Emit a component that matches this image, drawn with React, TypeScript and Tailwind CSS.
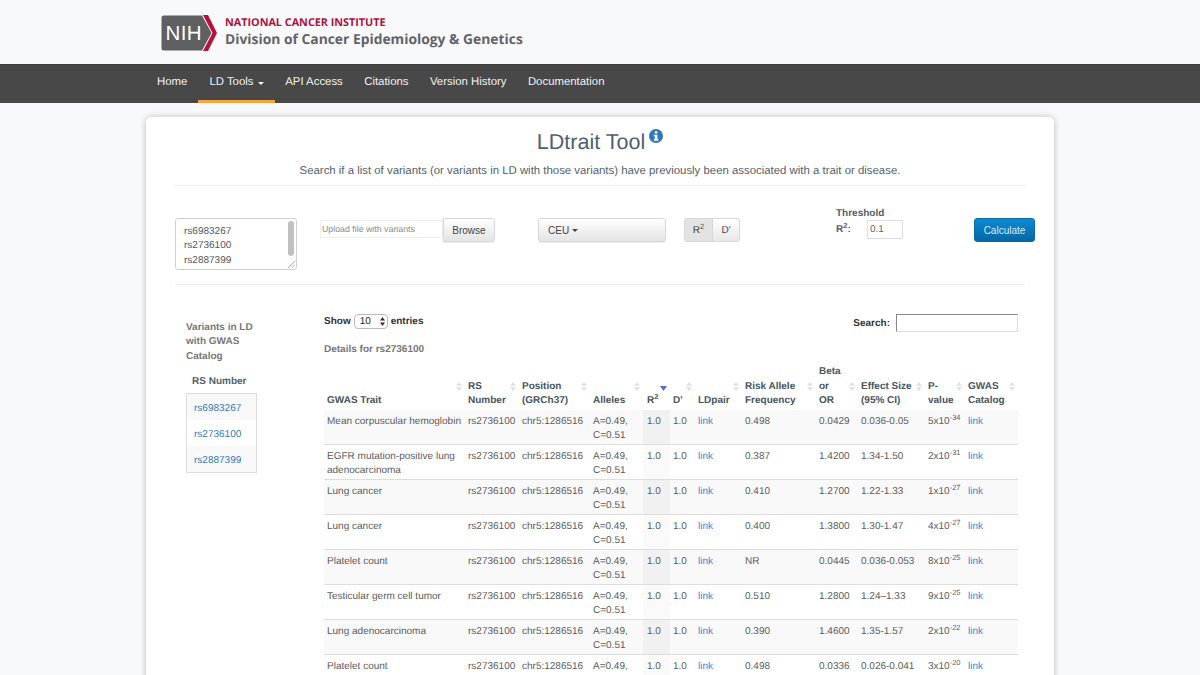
import React from "react";

const rows: [React.ReactNode, string, string, string, string, string][] = [
  ["Mean corpuscular hemoglobin", "0.498", "0.0429", "0.036-0.05", "5", "-34"],
  [<>EGFR mutation-positive lung<br />adenocarcinoma</>, "0.387", "1.4200", "1.34-1.50", "2", "-31"],
  ["Lung cancer", "0.410", "1.2700", "1.22-1.33", "1", "-27"],
  ["Lung cancer", "0.400", "1.3800", "1.30-1.47", "4", "-27"],
  ["Platelet count", "NR", "0.0445", "0.036-0.053", "8", "-25"],
  ["Testicular germ cell tumor", "0.510", "1.2800", "1.24–1.33", "9", "-25"],
  ["Lung adenocarcinoma", "0.390", "1.4600", "1.35-1.57", "2", "-22"],
  ["Platelet count", "0.498", "0.0336", "0.026-0.041", "3", "-20"],
];

const td = "h-[35px] border-b border-[#dddddd] px-[3px] pt-[5px] align-top";

function Sort({ active }: { active?: boolean }) {
  if (active) {
    return (
      <svg className="absolute right-[3px] bottom-[19px] w-[7px] h-[5px]" viewBox="0 0 7 5">
        <path d="M0 0h7L3.500 5z" fill="#5b6fc4" />
      </svg>
    );
  }
  return (
    <svg className="absolute right-[3px] bottom-[19px] w-[6px] h-[9px]" viewBox="0 0 6 9">
      <path d="M3 0l3 3.700H0zM3 9L0 5.300h6z" fill="#dfe1e3" />
    </svg>
  );
}

function Th({ children, w, active, pl }: { children: React.ReactNode; w: string; active?: boolean; pl?: string }) {
  return (
    <th className={`relative ${w} ${pl ?? "pl-[3px]"} pr-[3px] pb-[2px] text-left align-bottom font-bold leading-[14.25px] text-[#4a5560]`}>
      {children}
      <Sort active={active} />
    </th>
  );
}

const Sup = ({ children }: { children: React.ReactNode }) => (
  <sup className="relative top-[-4px] align-baseline text-[7.5px] leading-none">{children}</sup>
);

export default function App() {
  return (
    <div className="h-[675px] overflow-hidden bg-[#f8f9fb] text-[10px] text-[#5a5c60] [text-rendering:geometricPrecision] [font-family:'Liberation_Sans',Arial,sans-serif]">
      <header className="flex h-[64px] items-center gap-[8px] pl-[161px] pt-[1px]">
        <svg width="56" height="36" viewBox="0 0 56 36" className="shrink-0">
          <path d="M3 0.500h38l9.500 17.500-9.500 17.500H3a2.500 2.500 0 0 1-2.500-2.500V3A2.500 2.500 0 0 1 3 0.500z" fill="#5f6062" />
          <path d="M42 0h5l9 18-9 18h-5l9.500-18z" fill="#b5113f" />
          <text x="4.500" y="25" fill="#fff" fontSize="20.5" fontFamily="'Liberation Sans',sans-serif" textLength="36">NIH</text>
        </svg>
        <div className="flex flex-col [font-family:'Open_Sans',sans-serif]">
          <div className="text-[10.800px] font-bold leading-[13px] text-[#b0103f]">NATIONAL CANCER INSTITUTE</div>
          <div className="mt-[2px] text-[13.850px] font-bold leading-[18px] text-[#626467]">Division of Cancer Epidemiology &amp; Genetics</div>
        </div>
      </header>

      <nav className="flex h-[39px] items-stretch border-t border-[#3c3c3c] bg-[#484848] pl-[146px] text-[11.400px] text-[#f2f2f2]">
        <a className="flex items-center px-[11px] pb-[2px]">Home</a>
        <a className="flex items-center border-b-[3px] border-[#f0a63c] px-[11px]">
          LD Tools
          <span className="ml-[4px] mt-[1px] h-0 w-0 border-x-[3px] border-t-[3px] border-x-transparent border-t-[#f2f2f2]" />
        </a>
        <a className="flex items-center px-[10.700px] pb-[2px]">API Access</a>
        <a className="flex items-center px-[10.700px] pb-[2px]">Citations</a>
        <a className="flex items-center px-[10.700px] pb-[2px]">Version History</a>
        <a className="flex items-center px-[10.700px] pb-[2px]">Documentation</a>
      </nav>

      <main className="px-[146px] pt-[14px]">
        <section className="h-[700px] rounded-[5px] bg-white px-[29px] pt-[10px] shadow-[0_0_6px_rgba(0,0,0,0.25)]">
          <div className="flex h-[59px] flex-col items-center border-b border-[#eeeeee]">
            <div className="flex items-start">
              <h1 className="text-[21.500px] leading-[30px] text-[#4d5f72]">LDtrait Tool</h1>
              <svg className="ml-[4px] mt-[2px] h-[14px] w-[14px]" viewBox="0 0 14 14">
                <circle cx="7" cy="7" r="7" fill="#2f78b9" />
                <rect x="5.800" y="2.300" width="2.600" height="2.300" rx=".5" fill="#fff" />
                <path d="M4.800 5.700h3.600v4.500h1v1.500H4.800v-1.500h1V7.200h-1z" fill="#fff" />
              </svg>
            </div>
            <p className="mt-[6px] text-[11.400px] leading-[17px] text-[#55606c]">
              Search if a list of variants (or variants in LD with those variants) have previously been associated with a trait or disease.
            </p>
          </div>

          <div className="mr-[-10px] flex h-[98px] items-start pt-[32px]">
            <div className="relative h-[52px] w-[122px] shrink-0 rounded-[3px] border border-[#cfcfcf] pl-[8px] pt-[6px] leading-[14.250px] text-[#555]">
              rs6983267<br />rs2736100<br />rs2887399
              <div className="absolute right-[2px] top-[2px] h-[35px] w-[6px] rounded-[3px] bg-[#c1c1c1]" />
              <svg className="absolute bottom-[1px] right-[1px] h-[8px] w-[8px]" viewBox="0 0 8 8">
                <path d="M1 8l7-7M4.500 8L8 4.500" stroke="#999" strokeWidth="0.800" />
              </svg>
            </div>
            <div className="ml-[23px] flex items-start">
              <div className="mt-[2px] flex h-[18px] w-[123px] items-center border border-[#eeeeee] pl-[1px] pt-[1px] text-[8.800px] text-[#8a8a8a]">Upload file with variants</div>
              <button className="flex h-[24px] w-[52px] items-center justify-center rounded-r-[3px] border border-[#d8d8d8] bg-gradient-to-b from-white to-[#e4e4e4] text-[#444] shadow-[0_1px_1px_rgba(0,0,0,0.08)]">Browse</button>
            </div>
            <button className="ml-[43px] flex h-[24px] w-[128px] items-center rounded-[3px] border border-[#d8d8d8] bg-gradient-to-b from-white to-[#e4e4e4] pl-[9px] text-[#444] shadow-[0_1px_1px_rgba(0,0,0,0.08)]">
              CEU
              <span className="ml-[3px] h-0 w-0 border-x-[3px] border-t-[3px] border-x-transparent border-t-[#444]" />
            </button>
            <div className="ml-[18px] flex h-[24px]">
              <div className="flex w-[29px] items-center justify-center rounded-l-[3px] border border-[#d8d8d8] bg-[#e3e3e3] text-[#444]">
                <span>R<Sup>2</Sup></span>
              </div>
              <div className="flex w-[27px] items-center justify-center rounded-r-[3px] border border-l-0 border-[#d8d8d8] bg-gradient-to-b from-white to-[#e8e8e8] text-[#444]">D'</div>
            </div>
            <div className="ml-[96px] mt-[-12px] flex w-[67px] shrink-0 flex-col font-bold leading-[14px] text-[#55606c]">
              <div className="pt-[1px] leading-[13px]">Threshold</div>
              <div className="flex items-center">
                <span className="w-[31px] pt-[1px]">R<Sup>2</Sup>:</span>
                <div className="flex h-[19px] w-[36px] items-center border border-[#dddddd] pl-[2px] pt-[1px] font-normal text-[#666]">0.1</div>
              </div>
            </div>
            <button className="ml-[71px] h-[24px] w-[61px] shrink-0 rounded-[3px] border border-[#0a6ba8] bg-gradient-to-b from-[#0a8bd6] to-[#0567a5] text-[#d9ecf8]">Calculate</button>
          </div>

          <div className="flex border-t border-[#eeeeee]">
            <aside className="ml-[11px] w-[138px] shrink-0 pt-[36px]">
              <div className="w-[80px] font-bold leading-[14.250px] text-[#777]">Variants in LD with GWAS Catalog</div>
              <div className="ml-[6px] mt-[11px] font-bold leading-[14px] text-[#55606c]">RS Number</div>
              <div className="mt-[4px] w-[71px] border border-[#dddddd] text-[#337ab7]">
                <div className="flex h-[26px] items-center bg-[#f9f9f9] pl-[7px] pt-[3px]">rs6983267</div>
                <div className="flex h-[26px] items-center pl-[7px] pt-[3px]">rs2736100</div>
                <div className="flex h-[26px] items-center bg-[#f9f9f9] pl-[7px] pt-[3px]">rs2887399</div>
              </div>
            </aside>

            <div className="w-[694px] shrink-0 pt-[29px]">
              <div className="flex items-center justify-between font-bold text-[#333]">
                <div className="mt-[-3px] flex h-[18px] items-center">
                  Show
                  <span className="mx-[3px] flex h-[15px] w-[34px] items-center justify-between rounded-[4px] border border-[#bbbbbb] pl-[5px] pr-[2px] font-normal text-[#222]">
                    10
                    <svg width="5" height="9" viewBox="0 0 5 9"><path d="M2.500 0L5 3.500H0zM2.500 9L0 5.500h5z" fill="#333" /></svg>
                  </span>
                  entries
                </div>
                <div className="flex items-center">
                  Search:
                  <div className="ml-[6px] h-[18px] w-[122px] border border-[#dcdcdc] border-l-[#888] border-t-[#888]" />
                </div>
              </div>
              <div className="mt-[11px] font-bold leading-[14px] text-[#777]">Details for rs2736100</div>

              <table className="mt-[7px] w-[694px] table-fixed border-separate border-spacing-0">
                <thead>
                  <tr className="h-[46px]">
                    <Th w="w-[141px]">GWAS Trait</Th>
                    <Th w="w-[54px]">RS Number</Th>
                    <Th w="w-[71px]">Position (GRCh37)</Th>
                    <Th w="w-[53px]">Alleles</Th>
                    <Th w="w-[27px]" pl="pl-[4px]" active>R<Sup>2</Sup></Th>
                    <Th w="w-[25px]">D'</Th>
                    <Th w="w-[47px]">LDpair</Th>
                    <Th w="w-[74px]">Risk Allele Frequency</Th>
                    <Th w="w-[42px]">Beta<br />or<br />OR</Th>
                    <Th w="w-[67px]">Effect Size (95% CI)</Th>
                    <Th w="w-[40px]">P-value</Th>
                    <Th w="w-[53px]">GWAS Catalog</Th>
                  </tr>
                </thead>
                <tbody>
                  {rows.map((r, i) => (
                    <tr key={i} className={`leading-[14px] ${i % 2 === 0 ? "bg-[#f9f9f9]" : "bg-white"}`}>
                      <td className={`${td} whitespace-nowrap`}>{r[0]}</td>
                      <td className={td}>rs2736100</td>
                      <td className={td}>chr5:1286516</td>
                      <td className={td}>A=0.49, C=0.51</td>
                      <td className={`${td} pl-[4px] ${i % 2 === 0 ? "bg-[#f1f1f1]" : "bg-[#fafafa]"}`}>1.0</td>
                      <td className={td}>1.0</td>
                      <td className={`${td} text-[#3a8ad0]`}>link</td>
                      <td className={td}>{r[1]}</td>
                      <td className={td}>{r[2]}</td>
                      <td className={td}>{r[3]}</td>
                      <td className={`${td} whitespace-nowrap`}>{r[4]}x10<Sup>{r[5]}</Sup></td>
                      <td className={`${td} text-[#3a8ad0]`}>link</td>
                    </tr>
                  ))}
                </tbody>
              </table>
            </div>
          </div>
        </section>
      </main>
    </div>
  );
}
